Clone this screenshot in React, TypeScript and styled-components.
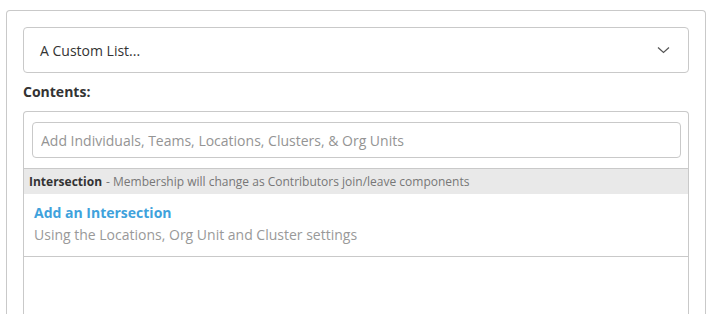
import styled, { createGlobalStyle } from "styled-components";

const GlobalStyle = createGlobalStyle`
  html, body {
    margin: 0;
    padding: 0;
    background: #ffffff;
    overflow: hidden;
  }
  body {
    font-family: "Open Sans", "Liberation Sans", sans-serif;
    color: #333333;
  }
  * {
    box-sizing: border-box;
  }
`;

const Panel = styled.div`
  margin: 10px 12px 0 6px;
  border: 1px solid #c9c9c9;
  border-bottom: none;
  border-radius: 4px 4px 0 0;
  padding: 16px 16px 0 16px;
  min-height: 340px;
`;

const Select = styled.div`
  height: 46px;
  border: 1px solid #c9c9c9;
  border-radius: 4px;
  display: flex;
  align-items: center;
  justify-content: space-between;
  padding: 0 18px 0 16px;
  font-size: 14px;
  color: #333333;
  cursor: pointer;
`;

const Label = styled.div`
  margin-top: 8px;
  font-size: 14px;
  font-weight: 700;
  line-height: 22px;
  color: #333333;
`;

const ContentsBox = styled.div`
  margin-top: 8px;
  border: 1px solid #c9c9c9;
  border-bottom: none;
  border-radius: 4px 4px 0 0;
  min-height: 220px;
`;

const SearchWrap = styled.div`
  padding: 10px 7px 10px 8px;
`;

const SearchInput = styled.input`
  display: block;
  width: 100%;
  height: 36px;
  border: 1px solid #c9c9c9;
  border-radius: 4px;
  padding: 0 8px;
  font-family: "Open Sans", "Liberation Sans", sans-serif;
  font-size: 14px;
  color: #333333;
  outline: none;
  &::placeholder {
    color: #949494;
  }
`;

const GroupBar = styled.div`
  border-top: 1px solid #c9c9c9;
  background: #e9e9e9;
  height: 26px;
  display: flex;
  align-items: center;
  padding-left: 5px;
  font-size: 12px;
  color: #777777;
  white-space: nowrap;
`;

const GroupName = styled.span`
  font-weight: 700;
  color: #333333;
  margin-right: 4px;
`;

const Item = styled.div`
  padding: 8px 10px 10px 10px;
  border-bottom: 1px solid #c9c9c9;
  line-height: 22px;
  font-size: 14px;
`;

const ItemTitle = styled.div`
  font-weight: 700;
  color: #3fa2dc;
  cursor: pointer;
`;

const ItemSub = styled.div`
  color: #999999;
`;

const Chevron = () => (
  <svg width="13" height="8" viewBox="0 0 13 8" fill="none">
    <polyline points="1,1.5 6.5,6.5 12,1.5" stroke="#555555" strokeWidth="1.2" />
  </svg>
);

export default function App() {
  return (
    <>
      <GlobalStyle />
      <Panel>
        <Select>
          <span>A Custom List...</span>
          <Chevron />
        </Select>
        <Label>Contents:</Label>
        <ContentsBox>
          <SearchWrap>
            <SearchInput placeholder="Add Individuals, Teams, Locations, Clusters, & Org Units" />
          </SearchWrap>
          <GroupBar>
            <GroupName>Intersection</GroupName>- Membership will change as Contributors join/leave components
          </GroupBar>
          <Item>
            <ItemTitle>Add an Intersection</ItemTitle>
            <ItemSub>Using the Locations, Org Unit and Cluster settings</ItemSub>
          </Item>
        </ContentsBox>
      </Panel>
    </>
  );
}
